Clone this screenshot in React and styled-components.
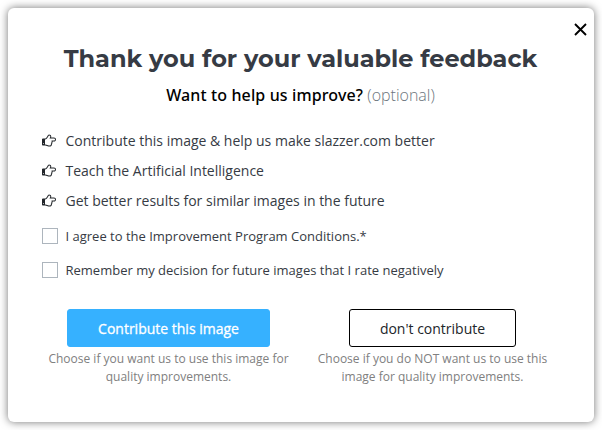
import styled, {createGlobalStyle} from 'styled-components';

const GlobalStyle = createGlobalStyle`
* {
  box-sizing: border-box;
}
body {
  margin: 0;
  background: #fff;
  font-family: "Open Sans", "Noto Sans", sans-serif;
}
`;

const Page = styled.div`
height: 430px;
padding: 8px;
overflow: hidden;
`;

const Modal = styled.div`
position: relative;
width: 586px;
height: 414px;
padding: 33px 33px 0 32px;
border-radius: 6px;
background: #fff;
box-shadow: 0 0 9px rgba(0, 0, 0, 0.55);
`;

const Close = styled.button`
position: absolute;
top: 15px;
right: 7px;
display: flex;
padding: 0;
border: 0;
background: none;
color: #000;
`;

const Title = styled.h1`
margin: 0;
font-family: Montserrat, Inter, sans-serif;
font-weight: 700;
font-size: 24px;
line-height: 36px;
text-align: center;
white-space: nowrap;
color: #363b44;
`;

const Subtitle = styled.p`
margin: 6px 0 0;
font-family: "Noto Sans", sans-serif;
font-weight: 500;
font-size: 16px;
line-height: 24px;
letter-spacing: 0.12px;
text-align: center;
color: #000;

span {
  font-family: "Open Sans", sans-serif;
  font-weight: 300;
  letter-spacing: 0;
  color: #6c757d;
}
`;

const List = styled.ul`
margin: 18px 0 0;
padding: 0;
list-style: none;
`;

const Item = styled.li`
display: flex;
align-items: center;
height: 30px;
font-size: 14px;
white-space: nowrap;
color: #363b44;
`;

const Hand = styled.svg`
flex: none;
width: 14px;
height: 14px;
margin: 2px 10px 0 1.5px;
fill: #212529;
`;

const Options = styled.div`
margin-top: 4px;
`;

const Option = styled.label`
display: flex;
align-items: center;
height: 34px;
font-size: 13px;
white-space: nowrap;
color: #363b44;

input {
  appearance: none;
  width: 16px;
  height: 16px;
  margin: 0 7.5px 0 2px;
  border: 1px solid #adb5bd;
  background: #fff;
}
`;

const Actions = styled.div`
display: flex;
margin: 22px 0 0 1px;
`;

const Action = styled.div`
display: flex;
flex: none;
flex-direction: column;
align-items: center;
width: ${props => props.$width}px;
`;

const Button = styled.button`
width: ${props => props.$width}px;
height: 38px;
padding: 0;
border: 1px solid ${props => (props.$primary ? '#36b1ff' : '#000')};
border-radius: 3px;
background: ${props => (props.$primary ? '#36b1ff' : '#fff')};
font-family: inherit;
font-size: 14px;
color: ${props => (props.$primary ? '#fff' : '#212529')};
-webkit-text-stroke: ${props => (props.$primary ? '0.3px' : '0')};
`;

const Hint = styled.p`
margin: 3px 0 0;
font-size: 12px;
line-height: 18px;
text-align: center;
white-space: nowrap;
color: #808080;
`;

const benefits = [
  'Contribute this image & help us make slazzer.com better',
  'Teach the Artificial Intelligence',
  'Get better results for similar images in the future',
];

function HandIcon () {
  return (
    <Hand viewBox="0 0 1792 1792" aria-hidden="true">
      <path
        transform="translate(0 1728) scale(1 -1)"
        fillRule="evenodd"
        d="M256 512q0 26 -19 45t-45 19t-45 -19t-19 -45t19 -45t45 -19t45 19t19 45zM1664 1024q0 51 -39 89.5t-89 38.5h-576q0 20 15 48.5t33 55t33 68t15 84.5q0 67 -44.5 97.5t-115.5 30.5q-24 0 -90 -139q-24 -44 -37 -65q-40 -64 -112 -145q-71 -81 -101 -106q-69 -57 -140 -57h-32v-640h32q72 0 167 -32t193.5 -64t179.5 -32q189 0 189 167q0 26 -5 56q30 16 47.5 52.5t17.5 73.5t-18 69q53 50 53 119q0 25 -10 55.5t-25 47.5h331q52 0 90 38t38 90zM1792 1023q0 -105 -75.5 -181t-180.5 -76h-169q-4 -62 -37 -119q3 -21 3 -43q0 -101 -60 -178q1 -139 -85 -219.5t-227 -80.5q-133 0 -322 69q-164 59 -223 59h-288q-53 0 -90.5 37.5t-37.5 90.5v640q0 53 37.5 90.5t90.5 37.5h288q10 0 21.5 4.5t23.5 14t22.5 18t24 22.5t20.5 21.5t19 21.5t14 17q65 74 100 129q13 21 33 62t37 72t40.5 63t55 49.5t69.5 17.5q125 0 206.5 -67t81.5 -189q0 -68 -22 -128h374q104 0 180 -76t76 -179z"
      />
    </Hand>
  );
}

function App () {
  return (
    <Page>
      <GlobalStyle />
      <Modal>
        <Close aria-label="Close">
          <svg width="13" height="13" viewBox="0 0 13 13">
            <path d="M1 1L12 12M12 1L1 12" stroke="currentColor" strokeWidth="1.9" />
          </svg>
        </Close>
        <Title>Thank you for your valuable feedback</Title>
        <Subtitle>Want to help us improve? <span>(optional)</span></Subtitle>

        <List>
          {benefits.map (text => (
            <Item key={text}><HandIcon />{text}</Item>
          ))}
        </List>

        <Options>
          <Option><input type="checkbox" />I agree to the Improvement Program Conditions.*</Option>
          <Option><input type="checkbox" />Remember my decision for future images that I rate negatively</Option>
        </Options>

        <Actions>
          <Action $width={255}>
            <Button $primary $width={203}>Contribute this image</Button>
            <Hint>Choose if you want us to use this image for<br />quality improvements.</Hint>
          </Action>
          <Action $width={273}>
            <Button $width={167}>don't contribute</Button>
            <Hint>Choose if you do NOT want us to use this<br />image for quality improvements.</Hint>
          </Action>
        </Actions>
      </Modal>
    </Page>
  );
}

export default App;
